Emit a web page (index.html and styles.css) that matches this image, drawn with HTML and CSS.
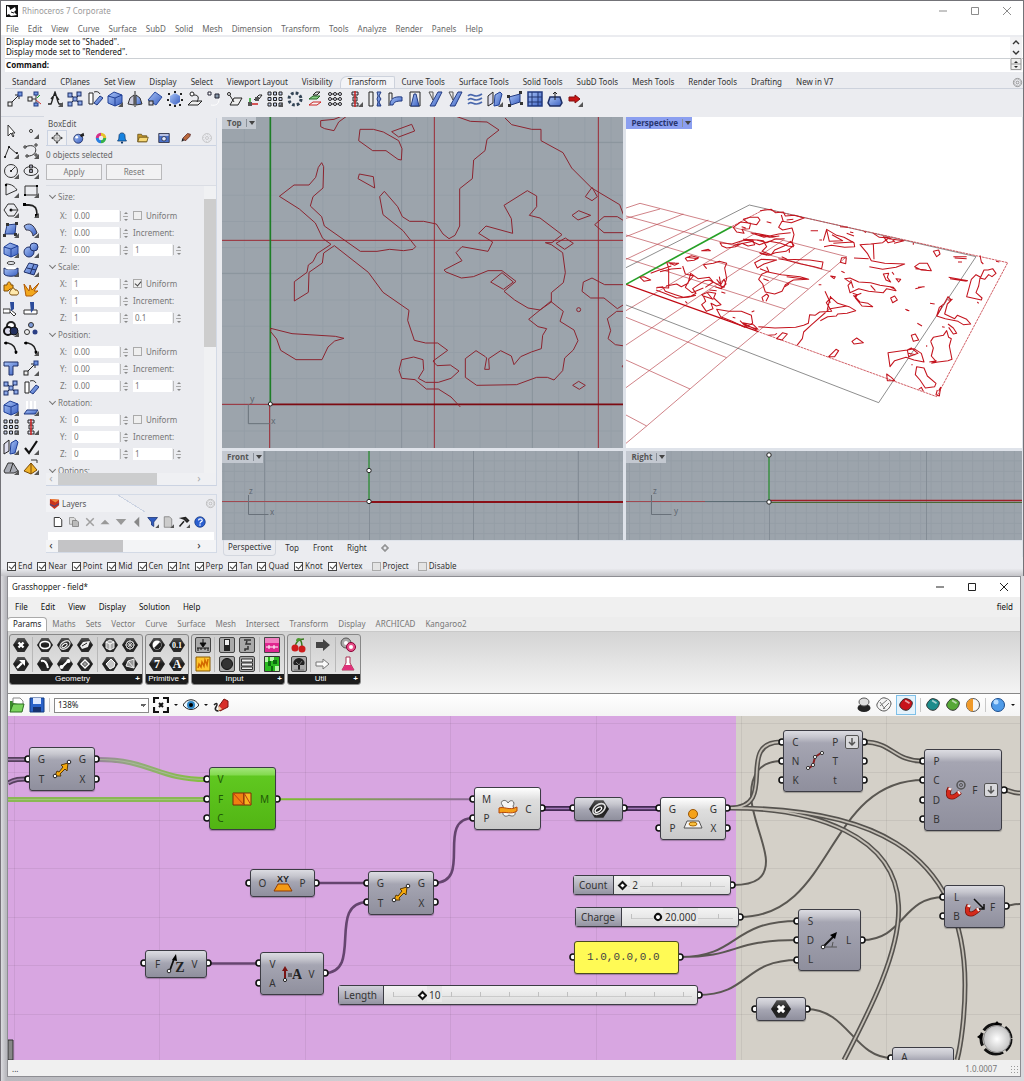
FILE: index.html
```html
<!DOCTYPE html>
<html lang="en">
<head>
<meta charset="utf-8">
<title>Rhinoceros 7 Corporate</title>
<link rel="stylesheet" href="styles.css">
</head>
<body>
<svg class="defs" aria-hidden="true">
<defs>
<linearGradient id="blue" x1="0" y1="0" x2="1" y2="1"><stop offset="0" stop-color="#a9c4f7"/><stop offset="1" stop-color="#3a5fc0"/></linearGradient>
<linearGradient id="fade" gradientUnits="userSpaceOnUse" x1="278" y1="0" x2="472" y2="0"><stop offset="0" stop-color="#7cc02c"/><stop offset="1" stop-color="#8d6a97"/></linearGradient>
<linearGradient id="fade2" gradientUnits="userSpaceOnUse" x1="96" y1="0" x2="206" y2="0"><stop offset="0" stop-color="#98829c"/><stop offset=".35" stop-color="#93ab7c"/><stop offset="1" stop-color="#84c03c"/></linearGradient>
<radialGradient id="ball"><stop offset="0" stop-color="#fff"/><stop offset="1" stop-color="#c4c4c4"/></radialGradient>
<linearGradient id="hexg" x1="0" y1="0" x2="0" y2="1"><stop offset="0" stop-color="#555"/><stop offset=".5" stop-color="#1c1c1c"/><stop offset="1" stop-color="#2c2c2c"/></linearGradient>
<circle id="grip" cx="4" cy="4" r="3" fill="#fff" stroke="#111" stroke-width="1.600"/>
</defs>
<symbol id="tri" viewBox="0 0 16 16"><path d="M16 11v5h-5z" fill="#555"/></symbol>
<symbol id="move" viewBox="0 0 16 16"><path d="M4 12 12 4" stroke="#222"/><path d="m8 4 4 0 0 4" fill="none" stroke="#222"/><rect x="1" y="11" width="4" height="4" fill="#eee" stroke="#222"/><rect x="11" y="1" width="4" height="4" fill="#6f93e0" stroke="#223a80"/></symbol>
<symbol id="copy" viewBox="0 0 16 16"><path d="M5 8h4M9 4v9" stroke="#333" fill="none"/><path d="m10 7 3-3" stroke="#2a2"/><path d="m9 9 5 4" stroke="#c33"/><rect x="1" y="6" width="4" height="4" fill="#eee" stroke="#222"/><rect x="7" y="1" width="4" height="3" fill="#6f93e0" stroke="#223a80"/><rect x="7" y="12" width="4" height="3" fill="#6f93e0" stroke="#223a80"/></symbol>
<symbol id="rotate" viewBox="0 0 16 16"><path d="M1 13h3C5 11 6 6 8 1c2 5 2 9 4 12h3M4 8l4-5 4 6" fill="none" stroke="#222" stroke-width="1.300"/></symbol>
<symbol id="multi" viewBox="0 0 16 16"><path d="m3 3 10 10M13 3 3 13" stroke="#222"/><g fill="#8fabea" stroke="#1d2f66"><rect x="1" y="2" width="4" height="4"/><rect x="10" y="1" width="4" height="4"/><rect x="6" y="6" width="4" height="4"/><rect x="1" y="11" width="4" height="4"/><rect x="11" y="10" width="4" height="4"/></g></symbol>
<symbol id="orient" viewBox="0 0 16 16"><path d="M2 2h4v11H2z" fill="#fff" stroke="#222"/><path d="m7 12 6-7 3 2-6 7z" fill="url(#blue)" stroke="#223a80"/><path d="M7 1c3-1 5 0 6 2" fill="none" stroke="#333"/></symbol>
<symbol id="box" viewBox="0 0 16 16"><path d="m1 5 6-4 8 3v8l-7 3-7-3z" fill="url(#blue)" stroke="#1f3f95"/><path d="m1 5 7 2 7-3M8 7v8" fill="none" stroke="#1f3f95"/></symbol>
<symbol id="mirror" viewBox="0 0 16 16"><path d="M8 0v16" stroke="#222"/><path d="M7 4 3 7 1 13l6 1z" fill="#ccd" stroke="#333"/><path d="m9 4 4 3 2 6-6 1z" fill="url(#blue)" stroke="#333"/></symbol>
<symbol id="diam" viewBox="0 0 16 16"><path d="M1 9 8 1l7 5-6 8z" fill="url(#blue)" stroke="#2a4b9f"/><rect x="2" y="10" width="4" height="4" fill="#ccd" stroke="#222"/></symbol>
<symbol id="cage" viewBox="0 0 16 16"><path d="m3 5 5-3 5 3v6l-5 3-5-3z" fill="url(#blue)"/><g fill="#222"><path d="M1 2h2v2H1zM7 0h2v2H7zM13 2h2v2h-2zM0 8h2v2H0zM14 8h2v2h-2zM2 13h2v2H2zM7 14h2v2H7zM12 13h2v2h-2z"/></g></symbol>
<symbol id="proj" viewBox="0 0 16 16"><path d="m1 14 4-4h10l-4 4z" fill="#eee" stroke="#222"/><circle cx="5" cy="3" r="2" fill="#fff" stroke="#222"/><path d="M7 4c5 0 5 3 3 7" fill="none" stroke="#222"/></symbol>
<symbol id="pts" viewBox="0 0 16 16"><path d="M1 1h3v3H1z" fill="#fff" stroke="#223"/><path d="M8 3h4v4H8z" fill="#89a" stroke="#223"/><path d="M4 14c5 1 8-1 8-6" fill="none" stroke="#fff"/></symbol>
<symbol id="plane" viewBox="0 0 16 16"><path d="m3 14 4-7h8l-4 7z" fill="#eee" stroke="#222"/><path d="m2 3 5 8" stroke="#222"/><circle cx="2" cy="3" r="1.500" fill="#fff" stroke="#222"/></symbol>
<symbol id="axes" viewBox="0 0 16 16"><path d="M3 13h8" stroke="#c22" stroke-width="1.500"/><path d="M3 12V7" stroke="#2a2" stroke-width="1.500"/><path d="m7 9 5-5h3l-3 4" stroke="#222" fill="none"/><path d="M1 11h4v4H1zM8 6h4v4H8z" fill="#555"/></symbol>
<symbol id="grid" viewBox="0 0 16 16"><g fill="#c8d2ee" stroke="#222"><path d="M1 1h3v3H1zM6.500 1h3v3h-3zM12 1h3v3h-3zM1 6.500h3v3H1zM6.500 6.500h3v3h-3zM12 6.500h3v3h-3zM1 12h3v3H1zM6.500 12h3v3h-3zM12 12h3v3h-3z"/></g></symbol>
<symbol id="ring" viewBox="0 0 16 16"><circle cx="8" cy="8" r="6" fill="none" stroke="#345" stroke-width="3" stroke-dasharray="2.700 2"/></symbol>
<symbol id="layers2" viewBox="0 0 16 16"><path d="m2 14 4-3h8l-4 3z" fill="#f4f4f4" stroke="#c22"/><path d="m2 8 4-3h7l-3 3z" fill="#8c8" stroke="#262"/><path d="m6 4 3-3h4l-3 3z" fill="#ddd" stroke="#222"/></symbol>
<symbol id="net" viewBox="0 0 16 16"><path d="M3 3h10M3 8h10M3 13h10" stroke="#222"/><g fill="#dde" stroke="#222"><circle cx="3" cy="3" r="1.500"/><circle cx="8" cy="3" r="1.500"/><circle cx="13" cy="3" r="1.500"/><circle cx="3" cy="8" r="1.500"/><circle cx="8" cy="8" r="1.500"/><circle cx="13" cy="8" r="1.500"/><circle cx="3" cy="13" r="1.500"/><circle cx="8" cy="13" r="1.500"/><circle cx="13" cy="13" r="1.500"/></g></symbol>
<symbol id="align" viewBox="0 0 16 16"><path d="M5 1h6v3H5zM6 6h4v4H6zM5 12h6v3H5z" fill="#dde" stroke="#222"/><path d="M8 0v16" stroke="#c22" stroke-width="1.500"/></symbol>
<symbol id="twist" viewBox="0 0 16 16"><path d="M2 1h4v14H2z" fill="#eee" stroke="#222"/><path d="M10 1h4l-2 4 2 3-2 3 2 4h-4l1-4-1-3 1-3z" fill="url(#blue)" stroke="#223a80"/></symbol>
<symbol id="bend" viewBox="0 0 16 16"><path d="M2 15V2h3v6" fill="#eee" stroke="#222"/><path d="M3 14c0-6 4-9 12-8v4c-6 0-8 1-9 4z" fill="url(#blue)" stroke="#223a80"/></symbol>
<symbol id="taper" viewBox="0 0 16 16"><path d="M3 1h10v14H3z" fill="#eee" stroke="#222"/><path d="M7 3h2l3 12H4z" fill="url(#blue)" stroke="#223a80"/></symbol>
<symbol id="shear" viewBox="0 0 16 16"><path d="M2 1h4v8z" fill="#eee" stroke="#555"/><path d="M11 1h4L8 15H3z" fill="url(#blue)" stroke="#223a80"/></symbol>
<symbol id="flow" viewBox="0 0 16 16"><path d="M1 5c4-5 6 4 14-2M1 9c4-5 6 4 14-2M1 13c4-5 6 4 14-2" fill="none" stroke="#4a68ad" stroke-width="1.600"/></symbol>
<symbol id="panels" viewBox="0 0 16 16"><path d="m1 5 5-4v11l-5 3z" fill="#dde" stroke="#222"/><path d="m8 4 5-3 2 2-3 11-5 1z" fill="url(#blue)" stroke="#1f3f95"/></symbol>
<symbol id="slab" viewBox="0 0 16 16"><path d="m2 6 11-3v8L4 14z" fill="url(#blue)" stroke="#223a80"/><path d="M0 4h3v3H0zM12 0h3v3h-3zM13 11h3v3h-3zM1 13h3v3H1z" fill="#333"/></symbol>
<symbol id="frame" viewBox="0 0 16 16"><path d="M1 1h14v14H1z" fill="url(#blue)" stroke="#223a80" stroke-width="1.500"/><path d="M5 1v14M11 1v14M1 6h14M1 11h14" stroke="#203570"/></symbol>
<symbol id="basin" viewBox="0 0 16 16"><path d="M3 6h10l2 6-2 3H3l-2-3z" fill="url(#blue)" stroke="#1f2f65" stroke-width="1.500"/><path d="M8 1v8M6 3l2-2 2 2" stroke="#222" fill="none"/></symbol>
<symbol id="red" viewBox="0 0 16 16"><path d="M2 6h6V4l5 4-5 4v-2H2z" fill="#c81414" stroke="#801010"/></symbol>
<symbol id="cursor" viewBox="0 0 16 16"><path d="M5 2v11l3-3 2 4 1-1-2-3h3z" fill="#fff" stroke="#333"/></symbol>
<symbol id="dot" viewBox="0 0 16 16"><circle cx="8" cy="8" r="1.500" fill="#fff" stroke="#333"/></symbol>
<symbol id="poly" viewBox="0 0 16 16"><path d="M2 14 6 4l8 7" fill="none" stroke="#333"/><circle cx="2" cy="14" r="1"/><circle cx="6" cy="4" r="1"/><circle cx="14" cy="10" r="1"/></symbol>
<symbol id="curve" viewBox="0 0 16 16"><path d="M2 4C16-2 16 14 4 13" fill="none" stroke="#333"/><path d="M1 3h2v2H1zM12 1h2v2h-2zM12 11h2v2h-2zM3 12h2v2H3z" fill="#fff" stroke="#333"/></symbol>
<symbol id="circ" viewBox="0 0 16 16"><circle cx="8" cy="8" r="6.500" fill="none" stroke="#333"/><path d="m8 8 4-4" stroke="#333"/><circle cx="8" cy="8" r="1"/></symbol>
<symbol id="ell" viewBox="0 0 16 16"><ellipse cx="8" cy="8" rx="7" ry="4.500" fill="none" stroke="#333"/><path d="M6.500 6.500h3v3h-3zM6.500 2h3v3h-3z" fill="#99a" stroke="#333"/></symbol>
<symbol id="arc" viewBox="0 0 16 16"><path d="M3 13V2c6 0 9 3 11 6L3 13" fill="none" stroke="#333"/><circle cx="3" cy="3" r="1.200"/></symbol>
<symbol id="rectg" viewBox="0 0 16 16"><path d="M2 4h12v9H2z" fill="none" stroke="#333"/><path d="M1 12h2v2H1zM13 3h2v2h-2z"/></symbol>
<symbol id="pgon" viewBox="0 0 16 16"><path d="M5 2h6l4 6-4 6H5L1 8z" fill="none" stroke="#333"/><circle cx="8" cy="8" r="1.500"/><path d="M8 8h6" stroke="#333"/></symbol>
<symbol id="fil" viewBox="0 0 16 16"><path d="M1 3h5c6 0 8 3 8 10" fill="none" stroke="#222" stroke-width="1.800"/><path d="M0 1h3v3H0zM12 12h3v3h-3z"/></symbol>
<symbol id="surf" viewBox="0 0 16 16"><path d="m2 12 2-9 9-1-1 10z" fill="url(#blue)" stroke="#223a80"/><path d="M0 12h3v3H0zM3 1h3v3H3zM12 0h3v3h-3zM11 11h3v3h-3z" fill="#333"/></symbol>
<symbol id="sheet" viewBox="0 0 16 16"><path d="M1 4c5-4 10-2 13 7l-4 3C9 9 7 8 3 8z" fill="url(#blue)" stroke="#334"/></symbol>
<symbol id="sph" viewBox="0 0 16 16"><circle cx="6" cy="10" r="5" fill="url(#blue)" stroke="#1f2f65"/><circle cx="11" cy="5" r="4" fill="url(#blue)" stroke="#1f2f65"/></symbol>
<symbol id="cyl" viewBox="0 0 16 16"><ellipse cx="8" cy="2" rx="4" ry="1.500" fill="none" stroke="#444"/><path d="M1 7c2 2 12 2 14 0v6c-2 3-12 3-14 0z" fill="url(#blue)" stroke="#1f2f65"/><ellipse cx="8" cy="7" rx="5" ry="1.500" fill="#fff"/></symbol>
<symbol id="quilt" viewBox="0 0 16 16"><path d="m1 11 5-9 9 2-4 10z" fill="url(#blue)" stroke="#1f2f65"/><path d="m4 7 9 2M11 3 7 13" stroke="#1f2f65"/></symbol>
<symbol id="puz" viewBox="0 0 16 16"><path d="M1 4h3c0-4 4-4 4 0h2v4h-3l-2 2H1z" fill="#f2a81d" stroke="#7a4b06"/><path d="M8 9c1-3 4-2 4 0h2c2 2 2 4 0 5h-5c-3 0-3-3-1-5z" fill="#ffe9ad" stroke="#7a4b06"/></symbol>
<symbol id="boom" viewBox="0 0 16 16"><path d="M3 15 1 3l5 7 1-6 2 5 7-7-5 8h4l-6 5z" fill="#f2a81d" stroke="#b05a06"/></symbol>
<symbol id="cut" viewBox="0 0 16 16"><path d="M0 8h7v4H0zM8 9l5 4-2 2-4-4" fill="#fff" stroke="#333"/><path d="M7 1h4v7l-3 2z" fill="#2b4b9b"/></symbol>
<symbol id="split" viewBox="0 0 16 16"><path d="M1 9h13v4H1z" fill="#fff" stroke="#333"/><path d="M7 1h4v7l-3 4z" fill="#2b4b9b"/></symbol>
<symbol id="bool" viewBox="0 0 16 16"><circle cx="8" cy="5" r="4" fill="#fff" stroke="#222" stroke-width="2"/><circle cx="5" cy="10" r="4" fill="#dde" stroke="#111" stroke-width="2"/><circle cx="11" cy="10" r="4" fill="#22305e" stroke="#111"/></symbol>
<symbol id="three" viewBox="0 0 16 16"><circle cx="8" cy="4" r="2.500" fill="#7d9ad8" stroke="#333"/><circle cx="4" cy="11" r="2.500" fill="#eee" stroke="#333"/><circle cx="12" cy="11" r="2.500" fill="#2b3f85"/></symbol>
<symbol id="arcs" viewBox="0 0 16 16"><path d="M1 3h4c5 1 8 5 8 11" fill="none" stroke="#222" stroke-width="1.500"/><circle cx="3" cy="3" r="1.500"/><circle cx="13" cy="12" r="1.500"/></symbol>
<symbol id="txt" viewBox="0 0 16 16"><path d="M1 2h14v4h-5v9H6V6H1z" fill="url(#blue)" stroke="#1f2f65"/></symbol>
<symbol id="ext" viewBox="0 0 16 16"><path d="m1 14 3-4h11l-3 4z" fill="url(#blue)" stroke="#223a80"/><path d="M4 1v8M8 1v8M12 1v8" stroke="#fff" stroke-width="2"/></symbol>
<symbol id="check" viewBox="0 0 16 16"><path d="m2 9 4 5 8-12" fill="none" stroke="#111" stroke-width="2.200"/></symbol>
<symbol id="hull" viewBox="0 0 16 16"><path d="m1 12 4-8h5l5 8-4 2H2z" fill="#a9acb5" stroke="#333"/><path d="m7 13 3-9" stroke="#333"/></symbol>
<symbol id="pyr" viewBox="0 0 16 16"><path d="m1 12 7-8 6 7-6 4z" fill="#f0b32a" stroke="#7a4b06"/><path d="m8 4v11" stroke="#7a4b06"/><path d="M8 1h6v3" fill="none" stroke="#333"/></symbol>
<symbol id="bulls" viewBox="0 0 16 16"><circle cx="8" cy="8" r="4.500" fill="#ddd" stroke="#333"/><path d="m8 0 2 3H6zM8 16l2-3H6zM0 8l3-2v4zM16 8l-3-2v4z" fill="#333"/><path d="M8 3v10M3 8h10" stroke="#999" stroke-width=".7"/></symbol>
<symbol id="globe" viewBox="0 0 16 16"><circle cx="7" cy="9" r="6" fill="url(#blue)" stroke="#0f1f55"/><circle cx="5" cy="7" r="1.800" fill="#fff"/><path d="m9 4 5-3 1 4-4 2z" fill="#222"/></symbol>
<symbol id="wheel" viewBox="0 0 16 16"><g fill="none" stroke-width="4"><path d="M8 3a5 5 0 0 1 5 5" stroke="#e8c02a"/><path d="M13 8a5 5 0 0 1-5 5" stroke="#35b04a"/><path d="M8 13a5 5 0 0 1-5-5" stroke="#2a7fe0"/><path d="M3 8a5 5 0 0 1 5-5" stroke="#d5308a"/></g></symbol>
<symbol id="bell" viewBox="0 0 16 16"><path d="M2 12c2-2 2-5 2-7 0-5 8-5 8 0 0 2 0 5 2 7z" fill="#1783e0" stroke="#123a6b"/><circle cx="8" cy="14" r="1.500" fill="#123a6b"/></symbol>
<symbol id="fold" viewBox="0 0 16 16"><path d="M1 3h5l1 2h6v8H1z" fill="#c69a2e" stroke="#5f4810"/><path d="m3 7h12l-2 6H1z" fill="#f7d875" stroke="#5f4810"/></symbol>
<symbol id="disp" viewBox="0 0 16 16"><path d="M1 2h14v12H1z" fill="#4a70c8" stroke="#223"/><circle cx="8" cy="9" r="3" fill="#dfe8ff" stroke="#223"/><path d="M2 3h12v2H2z" fill="#dde"/></symbol>
<symbol id="brush" viewBox="0 0 16 16"><path d="m2 13 1-5 3 3z" fill="#222"/><path d="m4 8 6-6 4 1-1 3-6 6z" fill="#b8683c" stroke="#522"/></symbol>
<symbol id="gear" viewBox="0 0 16 16"><circle cx="8" cy="8" r="6" fill="none" stroke="currentColor"/><circle cx="8" cy="8" r="2" fill="none" stroke="currentColor"/><circle cx="8" cy="8" r="4.500" fill="none" stroke="currentColor" stroke-dasharray="1.500 2"/></symbol>
<symbol id="page" viewBox="0 0 16 16"><path d="M3 2h7l3 3v9H3z" fill="#fff" stroke="currentColor" stroke-width="1.300"/></symbol>
<symbol id="pages" viewBox="0 0 16 16"><path d="M2 2h6l2 2v7H2z" fill="#ddd" stroke="#888"/><path d="M6 6h6l2 2v6H6z" fill="#bbb" stroke="#777"/></symbol>
<symbol id="graypage" viewBox="0 0 16 16"><path d="M3 1h7l3 3v11H3z" fill="#ccc" stroke="#777"/></symbol>
<symbol id="cross" viewBox="0 0 16 16"><path d="m3 3 10 10M13 3 3 13" stroke="#a0a0a0" stroke-width="2"/></symbol>
<symbol id="up" viewBox="0 0 16 16"><path d="m2 11 6-6 6 6z" fill="#999"/></symbol>
<symbol id="down" viewBox="0 0 16 16"><path d="m1 4 7 8 7-8z" fill="#999"/></symbol>
<symbol id="left" viewBox="0 0 16 16"><path d="m11 1-7 7 7 7z" fill="#888"/></symbol>
<symbol id="funnel" viewBox="0 0 16 16"><path d="M1 2h13L9 8v6l-3-2V8z" fill="#2f5bc0" stroke="#152f70"/></symbol>
<symbol id="hammer" viewBox="0 0 16 16"><path d="m2 14 6-7M5 3l5-1 4 4-2 2-4-4z" stroke="#222" stroke-width="2" fill="#444"/></symbol>
<symbol id="help" viewBox="0 0 16 16"><circle cx="8" cy="8" r="7" fill="#2b5fd0" stroke="#16387f"/><path d="M6 6c0-3 5-3 5 0 0 2-3 1-3 4m0 1v2" stroke="#fff" stroke-width="1.600" fill="none"/></symbol>
<symbol id="hex" viewBox="0 0 16 16"><path d="M4.500 1h7L16 8l-4.500 7h-7L0 8z" fill="url(#hexg)"/></symbol>
<symbol id="gx" viewBox="0 0 16 16"><path d="m5.500 5.500 5 5M10.500 5.500l-5 5" stroke="#fff" stroke-width="2.400"/></symbol>
<symbol id="garrow" viewBox="0 0 16 16"><path d="m4 12 5-5" stroke="#fff" stroke-width="2.400"/><path d="M6 4h6v6z" fill="#fff"/></symbol>
<symbol id="gell" viewBox="0 0 16 16"><ellipse cx="8" cy="8" rx="5" ry="3.500" fill="none" stroke="#fff" stroke-width="1.600"/></symbol>
<symbol id="gspiral" viewBox="0 0 16 16"><ellipse cx="8" cy="8" rx="5.500" ry="3.500" transform="rotate(-35 8 8)" fill="none" stroke="#ddd" stroke-width="1.300"/><ellipse cx="7.500" cy="8.500" rx="3" ry="1.500" transform="rotate(-35 7.500 8.500)" fill="none" stroke="#fff"/></symbol>
<symbol id="gquad" viewBox="0 0 16 16"><path d="m3 9 3-4 7-1-2 6-6 2z" fill="#eee"/><path d="m5 9 5-3" stroke="#222"/></symbol>
<symbol id="gbox" viewBox="0 0 16 16"><path d="m4 5 4-2 4 2v6l-4 2-4-2z" fill="#aaa" stroke="#eee"/><path d="m4 5 4 2 4-2M8 7v6" fill="none" stroke="#fff"/></symbol>
<symbol id="gstar" viewBox="0 0 16 16"><path d="M8 3v10M3 8h10M5 5l6 6M11 5l-6 6" stroke="#ccc"/><circle cx="8" cy="8" r="4" fill="none" stroke="#ccc"/></symbol>
<symbol id="garc" viewBox="0 0 16 16"><path d="M4 5c4-1 6 2 7 7" fill="none" stroke="#fff" stroke-width="2"/></symbol>
<symbol id="gline" viewBox="0 0 16 16"><path d="m5 11 6-6" stroke="#fff" stroke-width="2"/><circle cx="4.500" cy="11" r="2" fill="#fff"/><circle cx="11.500" cy="5" r="2" fill="#fff"/></symbol>
<symbol id="gdia" viewBox="0 0 16 16"><path d="m8 4 4 4-4 4-4-4z" fill="none" stroke="#fff" stroke-width="1.500"/><path d="M6 8h4M8 6v4" stroke="#ccc"/></symbol>
<symbol id="gmesh" viewBox="0 0 16 16"><path d="m4 8 5-5 4 4-1 4-4 2z" fill="#c8c8c8" stroke="#fff"/></symbol>
<symbol id="ggeo" viewBox="0 0 16 16"><path d="m4 10 2-5 6-2v9z" fill="#999" stroke="#eee"/><path d="m6 5 6 7" stroke="#eee"/></symbol>
<symbol id="ghalf" viewBox="0 0 16 16"><circle cx="8" cy="8" r="4.500" fill="#fff"/><path d="M11 5a4 4 0 0 1-6 6z" fill="#222"/></symbol>
<symbol id="tile" viewBox="0 0 16 16"><rect x=".5" y=".5" width="15" height="15" rx="1.500" fill="#a9a9a9" stroke="#444"/></symbol>
<symbol id="magnet" viewBox="0 0 20 20"><path d="M4 8c-3 5-2 9 2 9 3 0 5-2 8-5" fill="none" stroke="#7a140c" stroke-width="5"/><path d="M4 8c-3 5-2 9 2 9 3 0 5-2 8-5" fill="none" stroke="#d42a1c" stroke-width="3.400"/><path d="m2.500 8.500 3 1M12 11l2 3" stroke="#f2f2f2" stroke-width="2"/></symbol>
<symbol id="marrow" viewBox="0 0 20 20"><path d="m3 17 2-5 2 1 4-5-2-2 7-2-1 8-2-2-5 5 1 2z" fill="#f5a90c" stroke="#5b3a05"/><circle cx="3" cy="17" r="1.800" fill="#fff" stroke="#222"/><circle cx="17" cy="3" r="1.800" fill="#fff" stroke="#222"/></symbol>
<symbol id="downbox" viewBox="0 0 14 14"><rect x=".5" y=".5" width="13" height="13" rx="1.500" fill="#d9d9dc" stroke="#555"/><path d="M7 3v7M4 7l3 3 3-3" fill="none" stroke="#555" stroke-width="1.500"/></symbol>
<symbol id="capsule" viewBox="0 0 18 18"><path d="M2 8c2-4 5-7 8-6 4 1 7 3 6 6-1 4-4 7-7 7-4 0-8-4-7-7z" fill="currentColor" stroke="#222"/><path d="m8 4 5 3" stroke="#fff" stroke-opacity=".6" stroke-width="2"/></symbol>
</svg>

<main class="rhino">
<header class="titlebar">
<svg class="logo" viewBox="0 0 12 12"><path d="M0 0h12v12H0z" fill="#111"/><path d="M1 1c3 1 3 2 3 4l5-3 1 3-2 2 3 3-6 1-2-2-2 1z" fill="#fff"/><path d="m5 7 3 1" stroke="#111"/></svg>
<h1>Rhinoceros 7 Corporate</h1>
<div class="winbtns"><button aria-label="Minimize"><svg viewBox="0 0 8 8"><path d="M0 4h8"/></svg></button><button aria-label="Maximize"><svg viewBox="0 0 8 8"><path d="M.5.500h7v7h-7z"/></svg></button><button aria-label="Close"><svg viewBox="0 0 8 8"><path d="m0 0 8 8M8 0 0 8"/></svg></button></div>
</header>
<nav class="menu"><a href="#">File</a><a href="#">Edit</a><a href="#">View</a><a href="#">Curve</a><a href="#">Surface</a><a href="#">SubD</a><a href="#">Solid</a><a href="#">Mesh</a><a href="#">Dimension</a><a href="#">Transform</a><a href="#">Tools</a><a href="#">Analyze</a><a href="#">Render</a><a href="#">Panels</a><a href="#">Help</a></nav>
<section class="command">
<div class="history"><p>Display mode set to "Shaded".</p><p>Display mode set to "Rendered".</p></div>
<div class="prompt"><label for="cmd">Command:</label><input id="cmd" type="text"></div>
<svg class="cmdscroll" viewBox="0 0 12 34"><path d="m3 7 3-3 3 3M3 14l3 3 3-3" fill="none" stroke="#333" stroke-width="1.400"/><path d="M1 21.500h10v11H1zM1 27h10" fill="#eee" stroke="#999"/><path d="m4 26 2-2 2 2zM4 29l2 2 2-2z" fill="#222"/></svg>
</section>
<nav class="tabs"><a href="#">Standard</a><a href="#">CPlanes</a><a href="#">Set View</a><a href="#">Display</a><a href="#">Select</a><a href="#">Viewport Layout</a><a href="#">Visibility</a><a href="#" class="on">Transform</a><a href="#">Curve Tools</a><a href="#">Surface Tools</a><a href="#">Solid Tools</a><a href="#">SubD Tools</a><a href="#">Mesh Tools</a><a href="#">Render Tools</a><a href="#">Drafting</a><a href="#">New in V7</a><button class="opts" aria-label="Toolbar options"><svg><use href="#gear"/></svg></button></nav>
<div class="toolbar">
<button aria-label="Move"><svg><use href="#move"/></svg></button><button aria-label="Copy"><svg><use href="#copy"/></svg></button><button aria-label="Rotate"><svg><use href="#rotate"/><use href="#tri"/></svg></button><button aria-label="Scale"><svg><use href="#multi"/></svg></button><button aria-label="Orient"><svg><use href="#orient"/></svg></button><button aria-label="Box"><svg><use href="#box"/><use href="#tri"/></svg></button><button aria-label="Mirror"><svg><use href="#mirror"/></svg></button><button aria-label="Remap"><svg><use href="#diam"/></svg></button><button aria-label="Cage edit"><svg><use href="#cage"/></svg></button><button aria-label="Project"><svg><use href="#proj"/></svg></button><button aria-label="Set points"><svg><use href="#pts"/></svg></button><button aria-label="To plane"><svg><use href="#plane"/></svg></button><button aria-label="Remap axes"><svg><use href="#axes"/></svg></button><button aria-label="Array"><svg><use href="#grid"/><use href="#tri"/></svg></button><button aria-label="Polar array"><svg><use href="#ring"/></svg></button><button aria-label="Stack"><svg><use href="#layers2"/></svg></button><button aria-label="Distribute"><svg><use href="#net"/></svg></button><button aria-label="Align"><svg><use href="#align"/><use href="#tri"/></svg></button><button aria-label="Twist"><svg><use href="#twist"/></svg></button><button aria-label="Bend"><svg><use href="#bend"/></svg></button><button aria-label="Taper"><svg><use href="#taper"/></svg></button><button aria-label="Shear"><svg><use href="#shear"/></svg></button><button aria-label="Shear solid"><svg><use href="#shear"/></svg></button><button aria-label="Flow"><svg><use href="#flow"/></svg></button><button aria-label="Flow along surface"><svg><use href="#panels"/><use href="#tri"/></svg></button><button aria-label="Splop"><svg><use href="#slab"/></svg></button><button aria-label="Lattice"><svg><use href="#frame"/></svg></button><button aria-label="Maelstrom"><svg><use href="#basin"/></svg></button><button aria-label="Next"><svg><use href="#red"/><use href="#tri"/></svg></button>
</div>

<div class="work">
<aside class="tools">
<button aria-label="Select"><svg><use href="#cursor"/></svg></button><button aria-label="Point"><svg><use href="#dot"/><use href="#tri"/></svg></button>
<button aria-label="Polyline"><svg><use href="#poly"/><use href="#tri"/></svg></button><button aria-label="Curve"><svg><use href="#curve"/><use href="#tri"/></svg></button>
<button aria-label="Circle"><svg><use href="#circ"/><use href="#tri"/></svg></button><button aria-label="Ellipse"><svg><use href="#ell"/><use href="#tri"/></svg></button>
<button aria-label="Arc"><svg><use href="#arc"/><use href="#tri"/></svg></button><button aria-label="Rectangle"><svg><use href="#rectg"/><use href="#tri"/></svg></button>
<button aria-label="Polygon"><svg><use href="#pgon"/><use href="#tri"/></svg></button><button aria-label="Fillet"><svg><use href="#fil"/><use href="#tri"/></svg></button>
<button aria-label="Surface"><svg><use href="#surf"/><use href="#tri"/></svg></button><button aria-label="Sweep"><svg><use href="#sheet"/><use href="#tri"/></svg></button>
<button aria-label="Solid box"><svg><use href="#box"/><use href="#tri"/></svg></button><button aria-label="Spheres"><svg><use href="#sph"/><use href="#tri"/></svg></button>
<button aria-label="Pipe"><svg><use href="#cyl"/><use href="#tri"/></svg></button><button aria-label="Mesh"><svg><use href="#quilt"/><use href="#tri"/></svg></button>
<button aria-label="Join"><svg><use href="#puz"/></svg></button><button aria-label="Explode"><svg><use href="#boom"/></svg></button>
<button aria-label="Trim"><svg><use href="#cut"/></svg></button><button aria-label="Split"><svg><use href="#split"/></svg></button>
<button aria-label="Boolean"><svg><use href="#bool"/><use href="#tri"/></svg></button><button aria-label="Group"><svg><use href="#three"/></svg></button>
<button aria-label="Edit points"><svg><use href="#arcs"/></svg></button><button aria-label="Blend"><svg><use href="#arcs"/><use href="#tri"/></svg></button>
<button aria-label="Text"><svg><use href="#txt"/></svg></button><button aria-label="Move object"><svg><use href="#move"/><use href="#tri"/></svg></button>
<button aria-label="Copy object"><svg><use href="#multi"/></svg></button><button aria-label="Rotate object"><svg><use href="#orient"/></svg></button>
<button aria-label="Gumball"><svg><use href="#box"/><use href="#tri"/></svg></button><button aria-label="Extrude"><svg><use href="#ext"/><use href="#tri"/></svg></button>
<button aria-label="Array objects"><svg><use href="#grid"/><use href="#tri"/></svg></button><button aria-label="Align objects"><svg><use href="#align"/><use href="#tri"/></svg></button>
<button aria-label="Flow object"><svg><use href="#panels"/><use href="#tri"/></svg></button><button aria-label="Check"><svg><use href="#check"/><use href="#tri"/></svg></button>
<button aria-label="Hull"><svg><use href="#hull"/><use href="#tri"/></svg></button><button aria-label="Drafting aid"><svg><use href="#pyr"/><use href="#tri"/></svg></button>
</aside>

<aside class="side">
<section class="boxedit">
<h2>BoxEdit</h2>
<div class="ptabs"><button class="on" aria-label="BoxEdit"><svg><use href="#bulls"/></svg></button><button aria-label="Rendering"><svg><use href="#globe"/></svg></button><button aria-label="Materials"><svg><use href="#wheel"/></svg></button><button aria-label="Notifications"><svg><use href="#bell"/></svg></button><button aria-label="Libraries"><svg><use href="#fold"/></svg></button><button aria-label="Display"><svg><use href="#disp"/></svg></button><button aria-label="Paint"><svg><use href="#brush"/></svg></button><button class="pale" aria-label="Panel options"><svg><use href="#gear"/></svg></button></div>
<p class="sel">0 objects selected</p>
<div class="btns"><button>Apply</button><button>Reset</button></div>
<div class="scroller">
<div class="fields">
<fieldset><legend>Size:</legend>
<div class="r"><label for="sx">X:</label><input id="sx" value="0.00"><i class="spin"></i><label class="u"><input type="checkbox">Uniform</label></div>
<div class="r"><label for="sy">Y:</label><input id="sy" value="0.00"><i class="spin"></i><label for="si">Increment:</label></div>
<div class="r"><label for="sz">Z:</label><input id="sz" value="0.00"><i class="spin"></i><input class="inc" id="si" value="1"><i class="spin"></i></div></fieldset>
<fieldset><legend>Scale:</legend>
<div class="r"><label for="cx">X:</label><input id="cx" value="1"><i class="spin"></i><label class="u"><input type="checkbox" checked>Uniform</label></div>
<div class="r"><label for="cy">Y:</label><input id="cy" value="1"><i class="spin"></i><label for="ci">Increment:</label></div>
<div class="r"><label for="cz">Z:</label><input id="cz" value="1"><i class="spin"></i><input class="inc" id="ci" value="0.1"><i class="spin"></i></div></fieldset>
<fieldset><legend>Position:</legend>
<div class="r"><label for="px">X:</label><input id="px" value="0.00"><i class="spin"></i><label class="u"><input type="checkbox">Uniform</label></div>
<div class="r"><label for="py">Y:</label><input id="py" value="0.00"><i class="spin"></i><label for="pi">Increment:</label></div>
<div class="r"><label for="pz">Z:</label><input id="pz" value="0.00"><i class="spin"></i><input class="inc" id="pi" value="1"><i class="spin"></i></div></fieldset>
<fieldset><legend>Rotation:</legend>
<div class="r"><label for="rx">X:</label><input id="rx" value="0"><i class="spin"></i><label class="u"><input type="checkbox">Uniform</label></div>
<div class="r"><label for="ry">Y:</label><input id="ry" value="0"><i class="spin"></i><label for="ri">Increment:</label></div>
<div class="r"><label for="rz">Z:</label><input id="rz" value="0"><i class="spin"></i><input class="inc" id="ri" value="1"><i class="spin"></i></div></fieldset>
<fieldset><legend>Options:</legend></fieldset>
</div>
<div class="vbar"><i></i></div>
</div>
<div class="hbar pale"><b>‹</b><i class="wide"></i><b>›</b></div>
</section>
<section class="layers">
<header><svg viewBox="0 0 12 12"><path d="m1 1 10 1v6l-5 4-5-4z" fill="#c9341c"/><path d="m1 1 10 1-4 3z" fill="#f08a3c"/><path d="m1 7 5 2 5-3" fill="none" stroke="#2a4a9a"/></svg><h2>Layers</h2><button aria-label="Layer options"><svg><use href="#gear"/></svg></button></header>
<div class="ltools"><button aria-label="New layer"><svg><use href="#page"/></svg></button><button aria-label="Sublayer"><svg><use href="#pages"/></svg></button><button aria-label="Delete"><svg><use href="#cross"/></svg></button><button aria-label="Up"><svg><use href="#up"/></svg></button><button aria-label="Down"><svg><use href="#down"/></svg></button><button aria-label="Left"><svg><use href="#left"/></svg></button><button aria-label="Filter"><svg><use href="#funnel"/><use href="#tri"/></svg></button><button aria-label="Sheet"><svg><use href="#graypage"/><use href="#tri"/></svg></button><button aria-label="Tools"><svg><use href="#hammer"/><use href="#tri"/></svg></button><button aria-label="Help"><svg><use href="#help"/></svg></button></div>
<div class="llist"></div>
<div class="hbar"><b>‹</b><i></i><b>›</b></div>
</section>
</aside>

<div class="views">
<section class="view top">
<svg viewBox="6 21 1206 993" preserveAspectRatio="xMinYMin slice">
<defs><pattern id="g1" x="150" y="97" width="78.600" height="78.600" patternUnits="userSpaceOnUse"><path d="M0 1.500h79M1.500 0v79" stroke="#919ba4" stroke-width="3"/></pattern></defs>
<path d="M0 0h1220v1020H0z" fill="#9ca4ac"/><path d="M0 0h1220v1020H0z" fill="url(#g1)" opacity=".7"/>
<path d="M0 97h1220M0 490h1220M545 0v1020M937 0v1020" stroke="#848d96" stroke-width="3" opacity=".6"/>
<path d="M0 391h1220M643 0v1020M1135 0v1020M0 883h150M149 883v150" stroke="#9c2a34" stroke-width="3"/>
<path d="M151 883h1070" stroke="#7d0b12" stroke-width="5"/><path d="M151 0v883" stroke="#1d7d26" stroke-width="5"/>
<g fill="none" stroke="#8c2530" stroke-width="3">
<path d="M302 32v18l12 6 28 6 14-26 22-16M302 32l40-4 20-8M420 58h40l30 8 46 26 10 24-2 34-10-2-36-26h-40l-42-30zM515 65l60-22 9 20-48 18zM305 158l6 12-2 64-30 26-8 28 34 32 8 28 108 76h50l38-6 42 4 28-4 8-8-38-48-60-48-10-54 14-16 40 46 14 30 22 14h42l38 8 20 30 18 14 18-10 14-28v-112l38-30 4-56 34-28 6-34 36-28-36-24-50-2-40-14M305 158l-10 14-8 30-20 23h-45l-44 34 60 38 48 42 22 46 25 18M418 192l42 8 4 34-50-28zM333 403l-42 28-12 24-14 10-4 22-38 28v58l42-26 2-60 40-28 4-30 32-22 102 80 44 60 78 54-4 30 20 60 34 8h36l30 22-44 32 12 14 40-2 26 18-24 22-38 12h-38l-22-12 16-26-2-30-28-8-36 8-8 32 8 24 40 4 34 28h36l38 24 28 30M152 655l64 16 130 8 26 6-28 8-20 18-18 38h-78l-46-28-12-34-18-22zM922 242l28 16v32l-22 26 32 8 66 50-30 24h-20l18 6 34 24 8 60-6 30-36 30v28l-34 24 32-26 38 30-10 30 42 26 12 32-14 28-26 24-6 38-26 28-20-8h-32l-60 22-120 2-34-24v-56l32-24 28 18 4 4-6 34h14l-2-32 36-24 32 16 8 26 20-24 32-14 30-10 4-40 12-20-26-6-28-22 34-28-36-6-40-24-32-26 36-30-42-32h-42l-44 18-36 4-46-18-6-6 54-28-18-24 18-18 78 14 14-28-42-26 22-22 80 22-4-44-22-40zM812 516l34-28 34 28-30 22zM1008 400l28-16 24 16-26 18zM855 24l20 20 60 14h28v34l66 36 26 46 60 60 84 50 12 32M1116 232l16 28-16 12-20-12zM1056 316l20-14 36 14-38 14zM1124 344l28-24h40l22 14M1124 344l28 24h60M1212 524h-58l-38-20-26 12-4 28 26 20h40l40 32 22-14M1212 604h-22l-28 22 10 36-8 24 22 18 28 4M1058 826l18-12 20 12-18 12z"/><circle cx="1076" cy="599" r="6"/><circle cx="1210" cy="769" r="3"/></g>
<path d="M85 883v58h64" fill="none" stroke="#69717a" stroke-width="3"/><circle cx="151" cy="882" r="6" fill="#fff" stroke="#222" stroke-width="3"/>
<g class="ax3"><text x="90" y="876">y</text><text x="153" y="942">x</text></g>
</svg><button class="vt">Top<b></b></button></section>
<section class="view persp">
<svg viewBox="18 -219 1188 993" preserveAspectRatio="xMinYMin slice">
<g fill="none" stroke="#b8444c" stroke-width="2">
<path d="M60 40 680 200M18 78l614 167M18 135l547 162M18 205l477 152M18 382l302 121M18 510l192 87M18 675l62 33M18 760 80 708 320 503 495 357 680 200M18 593 585 175M18 465 490 150M18 362 405 130M18 208 265 90M18 140 190 72M18 85 120 57M60 40 18 54"/></g>
<path d="M18 233 388 45l680 155-292 438L18 345" fill="none" stroke="#555" stroke-width="2"/>
<path d="M335 110 435 57l728 161-213 402-535-195" fill="none" stroke="#c84048" stroke-width="2.500" stroke-dasharray="8 2"/>
<path d="m18 283 397 142" stroke="#c00812" stroke-width="4"/><path d="M18 283 335 110" stroke="#26a026" stroke-width="5"/>
<g fill="none" stroke="#c4141e" stroke-width="3.200" stroke-linejoin="round">
<path d="M420 62l34-4 12 10 24-2 6 12 28-2 28 8-22 8-16 6-28-4-10 18 12 8 28-6 6 20-6 22 4 14-16-2-22-8-34-6-30 10-24-10-24-6 40 2 30 8 24-10 30-2"/>
<path d="M340 112l22-16 30 4-4 16-22 2 6 12-22-4zM370 88l20-6h24l6 8-10 14-24-4zM440 95l14 4M365 110l12 4M300 158l36 4 30-10 32-2 6 14-20 4-18-8-20 10-26 4-14-6zM340 166l60-12M412 150l18 2 10 18-14 14 28 10 10-14 28-12 20-14 10 12-24 18-32 4-20 8-28-8M245 182l20-4 6 4zM196 205l18-8 22 6-14 8-20 2zM484 75l6 20M500 90l20-2M508 176v12"/>
<path d="M392 128l40 14 44-10 36-4M418 134l30 8 30-4M404 130l60 10M420 190l22 6M610 152l10-34 30 18 22 6 30 16 2 12-30 2-40-6-22 4M620 120l8 34 40-2-32-18M640 160l60-4M598 150h8M660 110l24 2M680 130l22 8M690 126l10 2M572 122h22M760 130l18 12 28 2-18 14-36 4-32 2 22 26 12 22 40 8 60 2-26 10-40 6-40-8M790 140l14 18 20-4-14-10zM806 146l46 6-30 8M702 204l44 2M760 162l2 46M732 124l6 4M880 158v6"/>
<path d="M485 200l16 8 68 2 40 6-4 20-22-6-40-8-46-12-22-4M404 218l20-10 46 2-38 12-20 12zM420 236l24 10 40 8 56 6 26 8-46 2-24 14-10 20-22 8-28-6-8-24-12-14 10-16 20-8-6-14M500 260l60 8M430 266l16 6M495 290l12-8M665 203h14l-2 18-16-4zM940 184l16-4 4 12-10 8zM884 230l14-10h24l12 22-30-2zM886 236l34 4M1000 200h40M1004 204l36 2M1014 216h12M1080 196l4 20 6 6M1128 214l10 2M632 258l14 2-4 6zM596 284h8M664 244l10 4"/>
<path d="M140 216l6 18v60l-34-2M108 294l20-4 8 14 30 10 24 8 24-4 14-8-10-14 36-24 14-2 34 18 10 4 8-26-6-32 6-14-22-6-18 6-30 4 10 12M108 300l22 8 40 16 34-2 24-6M138 288l32-6 14 8 20-10 8-30 22 16 34-4 12 14-24 16M188 228l8 24 24 6-14 16-10 18 20 16 34-14M60 262l12-2 20 10-20 4zM92 250l20-8 42-14M120 245l34-8 30-2M146 218l30 2-12 6zM245 314l20-8 22 4-6 14 22 20-14 4-16-8 6 16-20 8-14-20 12-10-6-14zM250 318l30 10M260 306l20 24M290 268l12 16 10-16 6 14-14 14-18-6M298 260l6 34M200 202l34 4M150 222l14-4M268 300l22 2M196 334l6 6M304 306l12 4"/>
<path d="M302 380l-12-22 36 6h38l30 12 4 24-24 12-38-18zM360 392l14 14 40 12-14-14-32-6M370 400l40 20M415 410l50 4 62-2 24-6 14-6 4-26 16 2 14-10 36-2-16-26 14-16 20 18 34 10 20 12-26 8-28 2-4 6-26 2-22 12M615 304l16 34M632 318l-10 40 58-10M625 360l-50 44-24 22-4 20-16 20M445 436l20-2 6-4M470 446l18-18 14 4-16 18zM626 500l22-22 8 4-12 18zM696 454l14-10 20 14-28 4zM430 334l-4-12 14-10 6 6-8 16M395 366l8-4M338 382l8 2"/>
<path d="M674 266l16-2 26 12 36 2 28 8 40 6 8 10-28-6-10 12-44-4-30-8-26 12-6-22 8-8zM692 270l8 24M752 286l14 16M810 290l16 8M698 310l14 4-6 10 20 24 32 2-14-10-24-4-16-18 20-8M700 316l20 20M790 252l16-2-4 12 10 14-14-6zM828 266l14 2-6 8zM816 246l6 8M812 324l12-6 8 12-14 8zM856 358l10 4M892 400l14 8M886 296l24-6M894 292l20-2M930 340l14 2M986 262l58 10M990 266l50 8M874 436l12-4 10 18-16 4zM1040 320l14-52 14-14 14 8 10-22h12l14-4 10 14-12 10-10-6-12 14-14-4-4 24-8 20 18 16-2 6z"/>
<path d="M950 378l8-26 14-10 12-22 10 10-12 12-8 30 30 14 8-10 28 12 12 14-22 2-16-10-38-8zM952 376l18-34M984 330l14-2M984 402l16 12 10 16-10 2-14-20M966 410l8 2M932 454l8-12 30-6 10-14 6 20 8 4-6 22 8 40-12 4-30 4-20 4M932 454l8 20-6 24 14 16-14 6M928 516l22-4M804 488l58-8 20-4 22 14 8 26-30-6-24-8-34 10-14 18zM862 480l12-6 20 16-28 10zM866 490l20 4M890 530l22 4 10 24 26 22-4 10-28 4-16-24-14-16zM800 552l14 10 10 10h-22zM896 598l8-6 6 12M956 602l6-10-4 26-10-4 4-14M874 524h4M1072 336l4 4M920 466v4M860 360l8 2"/>
</g></svg><button class="vt act">Perspective<b></b></button></section>
<section class="view front">
<svg viewBox="222 451 402 89" preserveAspectRatio="xMinYMin slice">
<defs><pattern id="g2" x="369" y="502" width="10.400" height="10.400" patternUnits="userSpaceOnUse"><path d="M0 .5h11M.5 0v11" stroke="#8b959e"/></pattern></defs>
<path d="M222 451h402v89H222z" fill="#9ca4ac"/><path d="M222 451h402v89H222z" fill="url(#g2)" opacity=".45"/><path d="M264.500 451v89M473.500 451v89M578.500 451v89M369.500 502v38" stroke="#848d96"/>
<path d="M222 501.500h147" stroke="#a04850"/><path d="M369 502h255" stroke="#8a1017" stroke-width="2"/><path d="M369 451v50" stroke="#3a8f42" stroke-width="1.500"/>
<path d="M248.500 495v19.500h20" fill="none" stroke="#69717a"/><g fill="#fff" stroke="#222"><circle cx="369" cy="470.500" r="2.200"/><circle cx="369" cy="501.500" r="2.200"/></g>
<g class="ax"><text x="249" y="494">z</text><text x="270" y="515">x</text></g></svg><button class="vt">Front<b></b></button></section>
<section class="view right">
<svg viewBox="626 451 396 89" preserveAspectRatio="xMinYMin slice">
<path d="M626 451h402v89H626z" fill="#9ca4ac"/><path d="M626 451h402v89H626z" fill="url(#g2)" opacity=".45"/><path d="M926.500 451v89M769.500 502v38" stroke="#848d96"/>
<path d="M626 501.500h79" stroke="#a04850"/><path d="M705 501.500h64" stroke="#5d6c74"/><path d="M769 500.500h253" stroke="#a02028" stroke-width="1.500"/><path d="M769 502.500h253" stroke="#4a6a35"/><path d="M769 455v46" stroke="#3a8f42" stroke-width="1.500"/>
<path d="M651.500 495v19.500h20" fill="none" stroke="#69717a"/><g fill="#fff" stroke="#222"><circle cx="769" cy="455" r="2.200"/><circle cx="769" cy="502" r="2.200"/></g>
<g class="ax"><text x="653" y="494">z</text><text x="674" y="514">y</text></g></svg><button class="vt">Right<b></b></button></section>
<nav class="vtabs"><a href="#" class="on">Perspective</a><a href="#">Top</a><a href="#">Front</a><a href="#">Right</a><button aria-label="Add view"><svg viewBox="0 0 8 8"><path d="M3 1h2v2h2v2H5v2H3V5H1V3h2z" fill="none" stroke="#777"/></svg></button></nav>
</div>
</div>
<div class="osnap"><label><input type="checkbox" checked>End</label><label><input type="checkbox" checked>Near</label><label><input type="checkbox" checked>Point</label><label><input type="checkbox" checked>Mid</label><label><input type="checkbox" checked>Cen</label><label><input type="checkbox" checked>Int</label><label><input type="checkbox" checked>Perp</label><label><input type="checkbox" checked>Tan</label><label><input type="checkbox" checked>Quad</label><label><input type="checkbox" checked>Knot</label><label><input type="checkbox" checked>Vertex</label><label class="off"><input type="checkbox">Project</label><label class="off"><input type="checkbox">Disable</label></div>
</main>

<section class="gh">
<header class="titlebar"><h1>Grasshopper - field*</h1><div class="winbtns"><button aria-label="Minimize"><svg viewBox="0 0 8 8"><path d="M0 4h8"/></svg></button><button aria-label="Maximize"><svg viewBox="0 0 8 8"><path d="M.5.500h7v7h-7z"/></svg></button><button aria-label="Close"><svg viewBox="0 0 8 8"><path d="m0 0 8 8M8 0 0 8"/></svg></button></div></header>
<nav class="ghmenu"><a href="#">File</a><a href="#">Edit</a><a href="#">View</a><a href="#">Display</a><a href="#">Solution</a><a href="#">Help</a><span>field</span></nav>
<nav class="ghtabs"><a href="#" class="on">Params</a><a href="#">Maths</a><a href="#">Sets</a><a href="#">Vector</a><a href="#">Curve</a><a href="#">Surface</a><a href="#">Mesh</a><a href="#">Intersect</a><a href="#">Transform</a><a href="#">Display</a><a href="#">ARCHICAD</a><a href="#">Kangaroo2</a></nav>
<div class="ribbon">
<section><div class="icons"><div><button aria-label="Point"><svg><use href="#hex"/><use href="#gx"/></svg></button><button aria-label="Vector"><svg><use href="#hex"/><use href="#garrow"/></svg></button></div><div><button aria-label="Circle"><svg><use href="#hex"/><use href="#gell"/></svg></button><button aria-label="Curve"><svg><use href="#hex"/><use href="#gspiral"/></svg></button><button aria-label="Surface"><svg><use href="#hex"/><use href="#gquad"/></svg></button><button aria-label="Arc"><svg><use href="#hex"/><use href="#garc"/></svg></button><button aria-label="Line"><svg><use href="#hex"/><use href="#gline"/></svg></button><button aria-label="Plane"><svg><use href="#hex"/><use href="#gdia"/></svg></button></div><div><button aria-label="Box"><svg><use href="#hex"/><use href="#gbox"/></svg></button><button aria-label="Mesh"><svg><use href="#hex"/><use href="#gstar"/></svg></button><button aria-label="Brep"><svg><use href="#hex"/><use href="#gmesh"/></svg></button><button aria-label="Geometry"><svg><use href="#hex"/><use href="#ggeo"/></svg></button></div></div><h3>Geometry<b>+</b></h3></section>
<section><div class="icons"><div><button aria-label="Boolean"><svg><use href="#hex"/><use href="#ghalf"/></svg></button><button aria-label="Number"><svg viewBox="0 0 16 16"><use href="#hex"/><text x="8" y="11" class="gt s">0.1</text></svg></button><button aria-label="Integer"><svg viewBox="0 0 16 16"><use href="#hex"/><text x="8" y="12" class="gt">7</text></svg></button><button aria-label="Text"><svg viewBox="0 0 16 16"><use href="#hex"/><text x="8" y="12" class="gt">A</text></svg></button></div></div><h3>Primitive<b>+</b></h3></section>
<section><div class="icons"><div><button aria-label="Slider"><svg viewBox="0 0 16 16"><use href="#tile"/><path d="M8 2v7M5 6l3 4 3-4zM2 11h12M3 11v3M6 11v2M10 11v2M13 11v3" stroke="#111"/></svg></button><button aria-label="Graph"><svg viewBox="0 0 16 16"><path d="M1 1h14v14H1z" fill="#ffc52e" stroke="#8a5a00"/><path d="m3 12 1-4 2 3 1-5 2 4 1-6 2 5 1-6" stroke="#d36a00" stroke-width="1.500" fill="none"/></svg></button></div><div><button aria-label="Toggle"><svg viewBox="0 0 16 16"><use href="#tile"/><path d="M5 2h6v12H5z" fill="#222"/><path d="M6 3h4v5H6z" fill="#eee"/></svg></button><button aria-label="Scroller"><svg viewBox="0 0 16 16"><use href="#tile"/><path d="M5 3h7M8 4 7 7h5M9 9v3H6v2" fill="none" stroke="#333" stroke-width="1.500"/></svg></button><button aria-label="Knob"><svg viewBox="0 0 16 16"><use href="#tile"/><circle cx="8" cy="8" r="5.500" fill="#333" stroke="#111"/></svg></button><button aria-label="List"><svg viewBox="0 0 16 16"><use href="#tile"/><path d="M2.500 3h11v3h-11zM2.500 7h11v3h-11zM2.500 11h11v2.500h-11z" fill="#eee" stroke="#333"/></svg></button></div><div><button aria-label="Gradient"><svg viewBox="0 0 16 16"><path d="M.5.500h15v15H.5z" fill="#e0268f" stroke="#444"/><path d="M1 1h14v5H1z" fill="#f080c0"/><path d="M2 10h12M5 8v4M10 8v4" stroke="#fff"/></svg></button><button aria-label="Image"><svg viewBox="0 0 16 16"><path d="M.5.500h15v15H.5z" fill="#2bbb20" stroke="#333"/><path d="M1 1h3v5H1zM11 10h4v5h-4zM6 1h4v4H6z" fill="#b6f5a8"/><path d="M4 5h3v5H4zM9 4h4v4H9zM7 10h2v5H7z" fill="#0d6a10"/></svg></button></div></div><h3>Input<b>+</b></h3></section>
<section><div class="icons"><div><button aria-label="Cherry"><svg viewBox="0 0 16 16"><path d="M4 10C5 4 8 2 13 2M11 11c0-4 0-7-2-8" fill="none" stroke="#3a7a20" stroke-width="1.500"/><path d="M5 4c0-3 3-4 5-2-1 2-3 3-5 2z" fill="#4a9a2c"/><circle cx="4" cy="11" r="3.500" fill="#cf1c1c"/><circle cx="11" cy="12" r="3.500" fill="#cf1c1c"/></svg></button><button aria-label="Tree"><svg viewBox="0 0 16 16"><use href="#tile"/><path d="M7 14V9L3 9C1 6 4 2 8 2s7 4 5 7l-4 0v5z" fill="#222"/><path d="M5 6l3 3 3-4M3 14h10" stroke="#777" fill="none"/></svg></button></div><div><button aria-label="Jump"><svg viewBox="0 0 16 16"><path d="M1 5h7V2l7 6-7 6v-3H1z" fill="#444"/></svg></button><button aria-label="Relay"><svg viewBox="0 0 16 16"><path d="M1 6h7V3l6 5-6 5v-3H1z" fill="#fafafa" stroke="#777"/></svg></button></div><div><button aria-label="Galapagos"><svg viewBox="0 0 16 16"><circle cx="6" cy="6" r="5" fill="#aaa" stroke="#555"/><circle cx="6" cy="6" r="2" fill="#fff"/><circle cx="11" cy="10" r="4.500" fill="#e84f8a" stroke="#803"/><circle cx="11" cy="10" r="2" fill="#fff"/></svg></button><button aria-label="Flask"><svg viewBox="0 0 16 16"><path d="M6 1h4v6l4 7H2l4-7z" fill="#fff" stroke="#a35"/><path d="M5 9h6l3 5H2z" fill="#e0307a"/></svg></button></div></div><h3>Util<b>+</b></h3></section>
</div>
<div class="ghbar">
<button aria-label="Open"><svg viewBox="0 0 16 16"><path d="M1 4h5l1 2h5v9H1z" fill="#3a8a2c"/><path d="M4 6V1h7l3 3v4" fill="#fff" stroke="#888"/><path d="m1 15 3-8h11l-2 8z" fill="#7bd35e" stroke="#2c6e20"/></svg></button><button aria-label="Save"><svg viewBox="0 0 16 16"><path d="M1 1h14v14H1z" fill="#2a62c8" stroke="#123a80"/><path d="M4 1h8v6H4z" fill="#dfe9ff"/><path d="M4 10h8v5H4z" fill="#16326e"/></svg></button><i class="sep"></i>
<select aria-label="Zoom"><option>138%</option></select>
<button aria-label="Zoom extents"><svg viewBox="0 0 16 16"><path d="M1 6V1h5M10 1h5v5M15 10v5h-5M6 15H1v-5" fill="none" stroke="#111" stroke-width="2.200"/><path d="m6 6 4 4M10 6l-4 4" stroke="#111" stroke-width="2"/></svg></button><i class="dd"></i><button aria-label="Views"><svg viewBox="0 0 16 16"><path d="M0 8c4-7 12-7 16 0-4 6-12 6-16 0z" fill="#eaf6ff" stroke="#222"/><circle cx="8" cy="8" r="4" fill="#2d87c8"/><circle cx="8" cy="8" r="2"/></svg></button><i class="dd"></i><button aria-label="Sketch"><svg viewBox="0 0 16 16"><path d="M1 8c3-3 4-1 2 2s1 5 4 3" fill="none" stroke="#222" stroke-width="1.500"/><path d="m6 9 5-7 4 2v6l-8 4z" fill="#d8302a" stroke="#7a1510"/><path d="m6 9 3 3-4 2z" fill="#f2c79a"/></svg></button>
<span class="grow"></span>
<button class="grey" aria-label="No preview"><svg viewBox="0 0 16 16"><ellipse cx="8" cy="11" rx="6.500" ry="4" fill="#222"/><ellipse cx="8" cy="5" rx="5" ry="4" fill="#ddd" stroke="#555"/></svg></button><button class="white" aria-label="Wireframe"><svg viewBox="0 0 16 16"><path d="M1 7c2-4 5-7 8-6 4 1 6 3 6 6-1 4-4 7-7 7-4 0-8-4-7-7z" fill="#f4f4f4" stroke="#555"/><path d="m4 9 7-6M7 12l6-6M4 5l5 7" stroke="#777"/></svg></button><button class="redc" aria-label="Shaded"><svg><use href="#capsule"/></svg></button><i class="sep"></i><button class="teal" aria-label="Selected"><svg><use href="#capsule"/></svg></button><button class="green" aria-label="Mesh edges"><svg><use href="#capsule"/></svg></button><button aria-label="Quality"><svg viewBox="0 0 16 16"><circle cx="8" cy="8" r="6.500" fill="#f6f6f6" stroke="#555"/><path d="M8 1.500a6.500 6.500 0 0 0 0 13z" fill="#f09a2a"/></svg></button><i class="sep"></i><button aria-label="Settings"><svg viewBox="0 0 16 16"><circle cx="8" cy="8" r="6.500" fill="#4f9be8" stroke="#1c4d8c"/><circle cx="6" cy="5" r="2.500" fill="#b6dcff"/></svg></button><i class="dd"></i>
</div>

<div class="canvas">
<svg class="wires" viewBox="8 716 1012 344" preserveAspectRatio="xMinYMin slice">
<path d="M8 716h728v344H8z" fill="#d8a6e1"/>
<path d="M14.500 716v344M159.500 716v344M305.500 716v344M450.500 716v344M596.500 716v344M741.500 716v344M886.500 716v344M8 723.500h1022M8 772.500h1022M8 820.500h1022M8 868.500h1022M8 917.500h1022M8 965.500h1022M8 1014.500h1022" stroke="#000" stroke-opacity=".06"/>
<defs>
<path id="w1" d="M8 759.500h18M8 783c7-4 12-4 18-4"/><path id="w2" d="M540 808.500h34M624 808.500h37"/>
<path id="w3" d="M730 808c50 0 4-66 51-66M864 742c28 0 30 19 58 19M730 808c85 0 166 28 168.500 97C901 950 870 1010 844 1060M730 808c130 0 235 35 235 177 0 30-4 60-8 75M1004 790c6 0 8 3 16 3"/></defs>
<g fill="none">
<use href="#w1" stroke="#56405e" stroke-width="5"/><use href="#w1" stroke="#a583b0" stroke-width="1.500"/>
<use href="#w2" stroke="#442a55" stroke-width="5"/><use href="#w2" stroke="#a277b8" stroke-width="1.500"/>
<path d="M98 759.500c52 0 60 20 108 20" stroke="url(#fade2)" stroke-width="5"/><path d="M98 759.500c52 0 60 20 108 20" stroke="#a8b898" stroke-width="1.200"/>
<path d="M8 799.500h198" stroke="#8ab854" stroke-width="5"/><path d="M8 799.500h198" stroke="#a2c478" stroke-width="1.200"/>
<path d="M278 799h194v.5H278z" stroke="url(#fade)" stroke-width="1.600"/>
<path d="M434 883c40 0 0-65 40-65M314 883h54M207 963.500h54M324 973c40 0 2-71 44-71" stroke="#65456f" stroke-width="2.600"/>
<g stroke="#5a5752" stroke-width="2"><path d="M733 885c24 0 33-8 33-24 0-16-15-46-15-66 0-20 9-34 31-34M740 917c95 0 85-137 184-137M680 957c60 0 50-36 118-36M680 957c60 0 50-17 118-17M698 995c52 0 45-35 100-35M862 940c42 0 40-43 82-43M1004 906c6 0 9-2 16-2M806 1009c42 0 48 49 86 49"/></g>
<use href="#w3" stroke="#55524e" stroke-width="5"/><use href="#w3" stroke="#c4bfb6" stroke-width="1.800"/>
</g>
<g><use href="#grip" x="24" y="755"/><use href="#grip" x="24" y="775"/><use href="#grip" x="92" y="755"/><use href="#grip" x="92" y="775"/><use href="#grip" x="203" y="775"/><use href="#grip" x="203" y="795"/><use href="#grip" x="203" y="814"/><use href="#grip" x="273" y="795"/><use href="#grip" x="469" y="795"/><use href="#grip" x="469" y="814"/><use href="#grip" x="538" y="804"/><use href="#grip" x="569" y="804"/><use href="#grip" x="620" y="804"/><use href="#grip" x="655" y="804"/><use href="#grip" x="655" y="824"/><use href="#grip" x="723" y="804"/><use href="#grip" x="723" y="824"/><use href="#grip" x="778" y="738"/><use href="#grip" x="778" y="757"/><use href="#grip" x="778" y="776"/><use href="#grip" x="860" y="738"/><use href="#grip" x="860" y="757"/><use href="#grip" x="860" y="776"/><use href="#grip" x="919" y="757"/><use href="#grip" x="919" y="776"/><use href="#grip" x="919" y="796"/><use href="#grip" x="919" y="815"/><use href="#grip" x="1000" y="786"/><use href="#grip" x="939" y="893"/><use href="#grip" x="939" y="912"/><use href="#grip" x="1002" y="902"/><use href="#grip" x="793" y="917"/><use href="#grip" x="793" y="936"/><use href="#grip" x="793" y="956"/><use href="#grip" x="858" y="936"/><use href="#grip" x="751" y="1005"/><use href="#grip" x="803" y="1005"/><use href="#grip" x="887" y="1054"/><use href="#grip" x="728" y="881"/><use href="#grip" x="736" y="913"/><use href="#grip" x="569" y="953"/><use href="#grip" x="676" y="953"/><use href="#grip" x="695" y="991"/><use href="#grip" x="245" y="879"/><use href="#grip" x="312" y="879"/><use href="#grip" x="363" y="879"/><use href="#grip" x="363" y="898"/><use href="#grip" x="431" y="879"/><use href="#grip" x="431" y="898"/><use href="#grip" x="140" y="959"/><use href="#grip" x="204" y="959"/><use href="#grip" x="255" y="959"/><use href="#grip" x="255" y="979"/><use href="#grip" x="321" y="969"/></g>
<g><circle cx="996" cy="1039" r="15" fill="none" stroke="#111" stroke-width="3" stroke-dasharray="13 3 20 4"/><circle cx="997" cy="1039" r="13.500" fill="url(#ball)" stroke="#888"/><path d="M994 1025h6l-3-4zM977 1037l5-4v7z"/></g>
<path d="M8 1040h5v20H8z" fill="#888" stroke="#333"/>
</svg>
<div class="node n-move1"><ul><li>G<li>T</ul><svg><use href="#marrow"/></svg><ul><li>G<li>X</ul></div>
<div class="node sel n-mesh"><ul><li>V<li>F<li>C</ul><svg viewBox="0 0 20 20"><path d="M1 4h11v12H1z" fill="#f08012" stroke="#7a2a08"/><path d="M12 4h7v12h-7z" fill="#f8b321" stroke="#7a2a08"/><path d="m1 4 11 12M12 4l7 12" stroke="#c23a10"/></svg><ul><li>M</ul></div>
<div class="node light n-section"><ul><li>M<li>P</ul><svg viewBox="0 0 20 20"><path d="M5 7c-5-5 3-8 5-3 3-5 8-1 5 3l2 6c1 4-3 5-6 3-4 3-7 0-6-4z" fill="#f6f6f6" stroke="#666"/><path d="M1 9c5-2 10 3 18-1v4c-6 4-11 0-18 2z" fill="#f4a018" stroke="#b5480c"/></svg><ul><li>C</ul></div>
<div class="node n-curve"><svg><use href="#hex"/><use href="#gspiral"/></svg></div>
<div class="node light n-project"><ul><li>G<li>P</ul><svg viewBox="0 0 20 20"><path d="m4 12h12l3 7H1z" fill="#f4f4f4" stroke="#555"/><ellipse cx="10" cy="15" rx="4" ry="2" fill="#f8c040" stroke="#a60"/><circle cx="10" cy="5" r="4.500" fill="#f5a21a" stroke="#9a5606"/></svg><ul><li>G<li>X</ul></div>
<div class="node n-divide"><ul><li>C<li>N<li>K</ul><svg viewBox="0 0 20 20"><path d="m3 18 5-4 2-8 6-4" fill="none" stroke="#8a2020" stroke-width="2"/><g fill="#fff" stroke="#333"><circle cx="3" cy="17" r="1.600"/><circle cx="8" cy="14" r="1.600"/><circle cx="10" cy="6" r="1.600"/><circle cx="17" cy="2" r="1.600"/></g></svg><ul><li>P<li>T<li>t</ul><svg class="db"><use href="#downbox"/></svg></div>
<div class="node n-pcharge"><ul><li>P<li>C<li>D<li>B</ul><svg viewBox="0 0 20 20"><use href="#magnet"/><circle cx="15" cy="5" r="4" fill="none" stroke="#555" stroke-width="1.500"/><circle cx="15" cy="5" r="1.500" fill="none" stroke="#555"/></svg><ul><li>F</ul><svg class="db"><use href="#downbox"/></svg></div>
<div class="node n-lcharge"><ul><li>L<li>B</ul><svg viewBox="0 0 20 20"><use href="#magnet"/><path d="m9 2 9 9M14 12h5V7" fill="none" stroke="#111" stroke-width="1.500"/></svg><ul><li>F</ul></div>
<div class="node n-sdl"><ul><li>S<li>D<li>L</ul><svg viewBox="0 0 20 20"><path d="M3 17h14M12 17l1-5" stroke="#555"/><path d="M4 16 14 6" stroke="#111" stroke-width="2"/><path d="m17 2-7 3 5 4z"/><circle cx="3" cy="17" r="1.800" fill="#fff" stroke="#222"/></svg><ul><li>L</ul></div>
<div class="node n-point"><svg><use href="#hex"/><use href="#gx"/></svg></div>
<div class="node n-a"><ul><li>A</ul></div>
<div class="node n-xy"><ul><li>O</ul><svg viewBox="0 0 20 20"><text x="10" y="9" class="it">XY</text><path d="M5 11h10l4 7H1z" fill="#f59a14" stroke="#8e3b06"/></svg><ul><li>P</ul></div>
<div class="node n-move2"><ul><li>G<li>T</ul><svg><use href="#marrow"/></svg><ul><li>G<li>X</ul></div>
<div class="node n-z"><ul><li>F</ul><svg viewBox="0 0 20 20"><path d="M4 16 8 5" stroke="#111" stroke-width="1.800"/><path d="m10 0-4 6 5 1z"/><circle cx="3" cy="17" r="1.800" fill="#fff" stroke="#222"/><text x="14" y="18" class="it big">Z</text></svg><ul><li>V</ul></div>
<div class="node n-amp"><ul><li>V<li>A</ul><svg viewBox="0 0 20 20"><path d="M3 15V6" stroke="#7a1414" stroke-width="2"/><path d="m3 2-3 5h6z" fill="#7a1414"/><circle cx="3" cy="16" r="1.600" fill="#fff" stroke="#222"/><path d="M6 10h4M6 12h4" stroke="#222"/><text x="15" y="15" class="it big">A</text></svg><ul><li>V</ul></div>
<div class="slider n-count"><label for="count">Count</label><div><input type="range" id="count" min="2" max="10" value="2"><output>2</output></div></div>
<div class="slider round n-charge"><label for="charge">Charge</label><div><input type="range" id="charge" min="-10" max="100" value="20"><output>20.000</output></div></div>
<div class="slider n-length"><label for="length">Length</label><div><input type="range" id="length" min="0" max="100" value="10"><output>10</output></div></div>
<div class="panel n-panel">1.0,0.0,0.0</div>
</div>
<footer class="status"><span>...</span><span class="ver">1.0.0007</span><i></i></footer>
</section>
</body>
</html>
```
FILE: styles.css
```css
* { box-sizing: border-box; }
body { margin: 0; background: linear-gradient(90deg, #77737a 1px, #dcdce0 1px, #b9b9be 6px, #d8d8dc 50%); font: 8px/12px "Noto Sans", "Open Sans", sans-serif; color: #333; padding-bottom: 3px; }
.defs { position: absolute; width: 0; height: 0; }
button { border: 0; padding: 0; background: none; font: inherit; color: inherit; display: block; }
button svg { display: block; width: 16px; height: 16px; }
a { color: inherit; text-decoration: none; }
h1, h2, h3, p, ul { margin: 0; padding: 0; font: inherit; }
input { font: inherit; color: inherit; }

.rhino { border: 1px solid #737378; border-width: 1px 1px 0; background: #ebecf0; }
.titlebar { display: flex; align-items: center; background: #fff; height: 20px; padding: 0 12px 0 5px; color: #9a9a9a; }
.logo { width: 12px; height: 12px; margin-right: 4px; }
.winbtns { display: flex; gap: 24px; margin-left: auto; }
.winbtns svg { width: 8px; height: 8px; fill: none; stroke: #8c8c8c; overflow: visible; }
.menu { display: flex; gap: 9px; background: #fff; padding: 2px 5px 0; color: #666; height: 14px; }
.command { position: relative; border: solid #ebecf0; border-width: 2px 0 4px 4px; background: #fff; color: #111; }
.history { border-bottom: 1px solid #ccd0d4; padding: 0 1px 1px; line-height: 10px; }
.prompt { display: flex; font-weight: bold; line-height: 12px; padding: 0 1px 1px; }
.prompt input { flex: 1; border: 0; padding: 0; background: none; height: 12px; outline: 0; }
.cmdscroll { position: absolute; right: 1px; top: 0; width: 12px; height: 34px; background: #f2f2f4; }
.tabs { display: flex; height: 13px; border-bottom: 1px solid #cdd2dc; margin-left: 4px; align-items: stretch; }
.tabs a { padding: 0 7px; }
.tabs .on { background: #f3f4f7; border: 1px solid #cdd2dc; border-bottom: 0; border-radius: 7px 2px 0 0; line-height: 10px; }
.opts { margin-left: auto; color: #777; }
.opts svg { width: 11px; height: 11px; }
.toolbar { display: flex; gap: 4px; padding: 2px 6px 9px; }

.work { display: grid; grid-template-columns: 43px 174px minmax(0, 1fr); gap: 0 2px; }
.tools { display: grid; grid-template-columns: 16px 16px; gap: 0 4px; height: 359px; align-content: space-between; padding: 6px 0 0 2px; border-top: 1px solid #d3d7e0; }
.side { color: #777; padding: 2px 3px 0 0; }
.boxedit { border-bottom: 1px solid #cbd3e2; border-right: 1px solid #d3dae6; }
.side h2 { color: #555; padding-left: 2px; line-height: 12px; }
.ptabs { display: flex; justify-content: space-between; border-bottom: 1px solid #cbd3e2; padding: 0 0 0 1px; height: 16px; }
.ptabs button { padding: 2px 3px; color: #999; }
.ptabs svg { width: 12px; height: 12px; }
.ptabs .on { border: 1px solid #cbd3e2; border-bottom: 0; background: #eff0f3; padding: 1px 3px; }
.pale { opacity: .55; }
.sel { padding: 3px 0 2px; color: #666; }
.btns { display: flex; gap: 4px; padding: 1px 0 5px; border-bottom: 1px solid #dadde4; }
.btns button { width: 56px; height: 16px; border: 1px solid #b9b9bb; background: #f2f2f3; color: #777; text-align: center; line-height: 14px; }
.scroller { display: flex; height: 287px; overflow: hidden; }
.fields { flex: 1; padding-top: 2px; }
fieldset { border: 0; margin: 0; padding: 0 0 0 14px; min-width: 0; }
legend { display: block; float: left; width: 100%; height: 17px; line-height: 17px; padding: 0; margin-left: -11px; position: relative; text-indent: 9px; }
fieldset:first-child legend { height: 19px; }
legend::before { content: ""; position: absolute; left: 1px; top: 5px; width: 4px; height: 4px; border: solid #777; border-width: 0 1px 1px 0; transform: rotate(45deg); }
.r { display: flex; clear: both; height: 17px; align-items: center; }
.r > label:first-child { width: 12px; }
.r > input { width: 47px; height: 12px; border: 0; padding: 0 2px; background: #fff; outline: 0; }
.r > .inc { width: 39px; }
.spin { width: 8px; height: 10px; margin: 0 5px 0 1px; border-left: 1px solid #bbb; position: relative; background: linear-gradient(#aaa, #aaa) 2px 5px / 6px 1px no-repeat; }
.spin::before, .spin::after { content: ""; position: absolute; left: 3px; border: 2px solid transparent; }
.spin::before { top: -1px; border-bottom-color: #888; }
.spin::after { bottom: -2px; border-top-color: #888; }
.u { display: flex; gap: 4px; align-items: center; }
input[type=checkbox] { appearance: none; margin: 0; width: 9px; height: 9px; border: 1px solid #aaa; background: #efefef; position: relative; flex: none; }
input[type=checkbox]:checked::after { content: ""; position: absolute; left: 2px; top: 0; width: 3px; height: 5px; border: solid #444; border-width: 0 1px 1px 0; transform: rotate(40deg); }
.vbar { width: 12px; padding-top: 13px; background: #f0f1f3; }
.vbar i { display: block; height: 148px; background: #cdcdcd; }
.hbar { display: flex; height: 12px; align-items: stretch; gap: 2px; background: #f3f4f6; }
.hbar b { width: 10px; text-align: center; font-size: 11px; font-weight: normal; line-height: 10px; }
.hbar i { width: 65px; background: #c4c4c6; }
.hbar .wide { width: 99px; background: #b4b4b4; }
.hbar b:last-child { margin-left: auto; margin-right: 12px; }
.layers { margin-top: 8px; border: 1px solid #d3dae6; border-left: 0; color: #333; }
.layers header { display: flex; align-items: center; height: 17px; padding-left: 3px; background: linear-gradient(32deg, #f1f2f5 52px, #cbd3e2 52px, #cbd3e2 53px, transparent 53px); }
.layers header > svg { width: 11px; height: 11px; }
.layers header button { margin-left: auto; color: #aaa; }
.layers header button svg { width: 11px; height: 11px; }
.ltools { display: flex; padding: 4px 10px 3px 6px; justify-content: space-between; }
.ltools svg { width: 12px; height: 12px; }
.llist { background: #fff; height: 8px; margin: 1px 2px 0; }

.views { display: grid; grid-template-columns: 402fr 396fr; grid-template-rows: 331px 89px auto; gap: 3px; background: #dfe3ea; margin-top: 1px; padding-right: 1px; }
.view { position: relative; overflow: hidden; background: #fff; }
.view > svg { display: block; width: 100%; height: 100%; }
.vt { position: absolute; left: 0; top: 0; display: flex; align-items: center; height: 12px; padding-left: 5px; background: linear-gradient(#8a9099, #8a9099) right 9px top 2px / 1px 8px no-repeat, #c3c8d0; color: #555; font-weight: bold; font-family: "Open Sans", sans-serif; }
.vt b { border: 3px solid transparent; border-top: 4px solid #444; border-bottom: 0; margin: 0 1px 0 7px; }
.vt.act { background-color: #8b9ff0; color: #27356e; }
.ax text { font-size: 8px; fill: #5f6770; }
.ax3 text { font-size: 26px; fill: #5f6770; }
.vtabs { grid-column: 1 / -1; display: flex; gap: 14px; background: #ebecf0; margin: -2px 0 0; padding: 0 6px 2px; height: 16px; align-items: center; }
.vtabs .on { border: 1px solid #d3d7df; border-top: 0; border-radius: 0 0 4px 4px; padding: 1px 4px 2px; margin: 0 -5px; }
.vtabs svg { width: 8px; height: 8px; }
.osnap { display: flex; gap: 5px; padding: 3px 6px 4px; color: #333; background: linear-gradient(#ebecf0 60%, #c4c4c8); height: 19px; }
.osnap label { display: flex; gap: 2px; align-items: center; }
.osnap input[type=checkbox] { border-color: #444; background: #fff; }
.osnap .off { margin-left: 4px; }
.osnap .off input[type=checkbox] { border-color: #aaa; background: #e4e4e4; }

.gh { margin: 0 3px 0 7px; border: 1px solid #8d8d92; background: #f0f0f0; }
.gh .titlebar { color: #222; padding: 0 12px 0 4px; }
.gh .winbtns svg { stroke: #222; }
.ghmenu { display: flex; gap: 13px; padding: 4px 7px; color: #111; }
.ghmenu span { margin-left: auto; }
.ghtabs { display: flex; gap: 10px; height: 15px; align-items: center; padding-left: 4px; color: #777; border-bottom: 1px solid #c9c9c9; background: #ededed; }
.ghtabs .on { background: #fff; color: #222; padding: 0 5px; margin: 0 -5px; align-self: stretch; border: 1px solid #aaa; border-bottom: 0; border-radius: 4px 4px 0 0; }
.ribbon { display: flex; gap: 2px; padding: 2px 1px 8px; background: linear-gradient(#d4d4d4, #f4f4f4); border-bottom: 1px solid #888; }
.ribbon section { border: 1px solid #888; border-radius: 3px; background: linear-gradient(#cfcfcf, #e8e8e8); overflow: hidden; }
.icons { display: flex; padding: 2px 0; }
.icons > div { display: grid; grid-auto-flow: column; grid-template-rows: 16px 16px; gap: 3px 4px; padding: 0 3px; }
.icons > div + div { border-left: 1px solid #b8b8b8; padding: 0 4px; }
.ribbon section:first-child .icons > div:nth-child(2) { grid-auto-flow: row; grid-template-columns: 16px 16px 16px; }
.ribbon section:first-child .icons > div:nth-child(3), .ribbon section:nth-child(2) .icons > div, .ribbon section:nth-child(3) .icons > div:nth-child(2) { grid-auto-flow: row; grid-template-columns: 16px 16px; }
.ribbon h3 { background: #1c1c1c; color: #fff; font: 8px/10px "Liberation Sans", sans-serif; text-align: center; position: relative; padding-right: 7px; }
.ribbon h3 b { position: absolute; right: 2px; }
.gt { font: bold 12px "Liberation Serif", serif; fill: #fff; text-anchor: middle; }
.gt.s { font-size: 8px; }
.ghbar { display: flex; align-items: center; height: 22px; background: linear-gradient(#fff, #f4f4f4); padding: 0 4px 0 1px; gap: 4px; }
.ghbar svg { width: 16px; height: 16px; }
.sep { width: 1px; height: 14px; background: #c8c8c8; }
.ghbar select { appearance: none; width: 95px; height: 15px; border: 1px solid #8a8a8a; border-radius: 0; padding: 0 3px; font: inherit; color: #222; background: linear-gradient(45deg, transparent 50%, #666 50%) 85px 5px / 3px 3px no-repeat, linear-gradient(-45deg, transparent 50%, #666 50%) 88px 5px / 3px 3px no-repeat, #fff; }
.dd { border: 2px solid transparent; border-top-color: #111; border-bottom: 0; margin: 0 1px; }
.grow { flex: 1; }
.redc { color: #c8141c; border: 1px solid #7ec0e8; padding: 1px; background: #e4f2fb; }
.teal { color: #1c8c8c; }
.green { color: #57a836; }

.canvas { position: relative; height: 344px; overflow: hidden; background: #d4d0c8; font-size: 10px; line-height: 12px; color: #333; }
.wires { display: block; width: 100%; height: 100%; }
.node { position: absolute; display: flex; justify-content: space-between; align-items: center; border: 1px solid #3c3c44; border-radius: 3px; padding: 1px 7px; background: linear-gradient(#dcdce2, #c6c6ce 6px, #a5a5b2 12px, #8f8f9d); box-shadow: 0 1px 1px #0004; }
.node.light { background: linear-gradient(#fff, #dedede 12px, #c9c9c9); }
.node.sel { background: linear-gradient(#a2e57a, #82da4e 7px, #60c820 8px, #52b514); color: #1f5a08; padding: 1px 6px; }
.node ul { list-style: none; height: 100%; display: flex; flex-direction: column; justify-content: space-around; text-align: center; min-width: 9px; }
.node ul li { flex: 1; display: flex; align-items: center; justify-content: center; }
.node svg { width: 20px; height: 20px; flex: none; }
.node .db { width: 14px; height: 14px; }
.n-divide .db { align-self: flex-start; margin: 3px -4px 0 0; }
.n-pcharge .db { margin-right: -4px; }
.node.n-curve, .node.n-point { justify-content: center; }
.it { font: bold 9px "Liberation Sans", sans-serif; text-anchor: middle; fill: #222; }
.it.big { font: bold 14px "Liberation Serif", serif; }
.n-move1 { left: 21px; top: 31px; width: 66px; height: 44px; }
.n-mesh { left: 201px; top: 51px; width: 67px; height: 63px; }
.n-section { left: 466px; top: 71px; width: 67px; height: 43px; }
.n-curve { left: 566px; top: 81px; width: 49px; height: 24px; }
.n-project { left: 652px; top: 81px; width: 66px; height: 43px; }
.n-divide { left: 775px; top: 14px; width: 80px; height: 62px; }
.n-pcharge { left: 916px; top: 33px; width: 78px; height: 82px; }
.n-lcharge { left: 936px; top: 169px; width: 61px; height: 43px; }
.n-sdl { left: 790px; top: 193px; width: 63px; height: 62px; }
.n-point { left: 748px; top: 281px; width: 50px; height: 24px; }
.n-a { left: 884px; top: 331px; width: 62px; height: 20px; line-height: 6px; }
.n-xy { left: 242px; top: 153px; width: 65px; height: 28px; }
.n-move2 { left: 360px; top: 155px; width: 66px; height: 44px; }
.n-z { left: 137px; top: 234px; width: 62px; height: 28px; }
.n-amp { left: 252px; top: 236px; width: 64px; height: 43px; }
.slider { position: absolute; display: flex; height: 20px; border: 1px solid #3c3c44; border-radius: 3px; background: linear-gradient(#f4f4f4, #dcdcdc); box-shadow: 0 1px 1px #0004; }
.slider label { padding: 0 6px 0 5px; line-height: 18px; border-right: 1px solid #3c3c44; background: linear-gradient(#cfcfd8, #9494a2); }
.slider div { position: relative; flex: 1; padding: 0 5px; }
.slider output { position: absolute; top: 0; line-height: 18px; background: #e8e8e8; height: 16px; padding: 0 2px; }
.slider input { display: block; appearance: none; width: 100%; height: 18px; margin: 0; background: repeating-linear-gradient(90deg, #c0c0c0 0 1px, transparent 1px 29px) 4px 6px / 100% 5px no-repeat, linear-gradient(#cacaca, #cacaca) 4px 10px / 100% 1px no-repeat; }
.slider input::-webkit-slider-thumb { appearance: none; width: 7px; height: 7px; border: 2px solid #111; background: #fff; transform: rotate(45deg); box-shadow: 0 0 0 1px #e8e8e8; }
.round input::-webkit-slider-thumb { border-radius: 50%; width: 8px; height: 8px; }
.n-count { left: 565px; top: 159px; width: 158px; }
.n-count output { left: 16px; }
.n-charge { left: 567px; top: 191px; width: 164px; }
.n-charge output { left: 41px; }
.n-length { left: 330px; top: 269px; width: 360px; }
.n-length output { left: 43px; }
.panel { position: absolute; border: 1px solid #4a4a20; border-radius: 3px; background: #fffa55; font: 11px/12px "Liberation Mono", monospace; color: #444; box-shadow: 0 1px 1px #0004; }
.n-panel { left: 566px; top: 225px; width: 105px; height: 33px; padding: 9px 12px; }
.status { display: flex; align-items: center; height: 16px; padding: 2px 2px 0 4px; color: #333; }
.ver { margin-left: auto; color: #777; }
.status i { width: 8px; height: 8px; margin-left: 13px; background: radial-gradient(#999 1px, transparent 1px) 0 0 / 3px 3px; }
```
